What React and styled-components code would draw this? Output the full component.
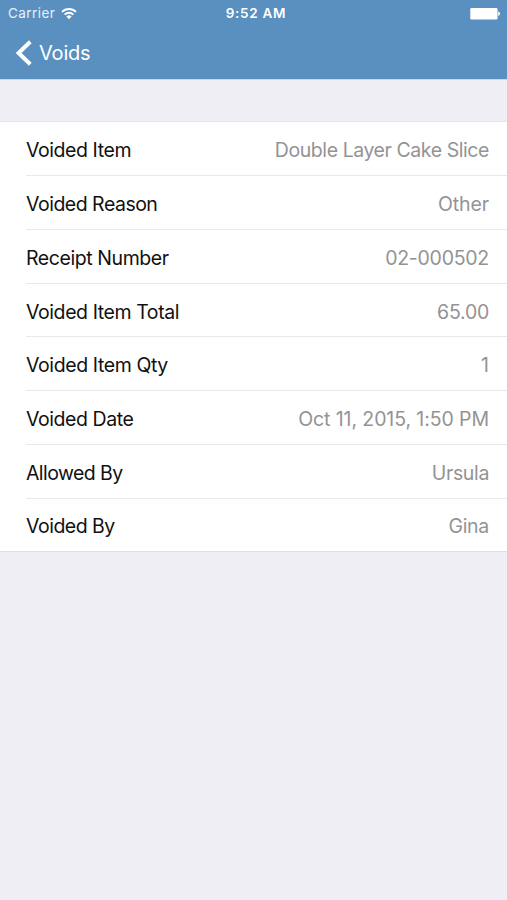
import React from 'react';
import styled, { createGlobalStyle } from 'styled-components';

const GlobalStyle = createGlobalStyle`
  body {
    margin: 0;
    background: #EFEEF4;
    font-family: Inter, "Liberation Sans", sans-serif;
  }
`;

const Screen = styled.div`
  width: 507px;
  height: 900px;
  overflow: hidden;
  background: #EFEEF4;
`;

const Header = styled.header`
  height: 79px;
  background: #5990BF;
  border-bottom: 1px solid #C3D8EA;
  color: #FFFFFF;
`;

const StatusBar = styled.div`
  height: 27px;
  padding: 0 6px 0 8px;
  display: grid;
  grid-template-columns: 1fr auto 1fr;
  align-items: center;
  font-size: 13.5px;
  line-height: 27px;
`;

const Carrier = styled.div`
  display: flex;
  align-items: center;
  gap: 6px;
  color: #E6F1FA;
  letter-spacing: 0.45px;
`;

const Time = styled.div`
  font-weight: 600;
  letter-spacing: 0.7px;
  padding-left: 3px;
`;

const Battery = styled.div`
  justify-self: end;
  display: flex;
  align-items: center;
`;

const BackButton = styled.button`
  height: 51px;
  padding: 0 0 0 15px;
  border: 0;
  background: none;
  color: #FFFFFF;
  display: flex;
  align-items: center;
  gap: 7px;
  font-family: inherit;
  font-size: 20px;
  letter-spacing: -0.2px;
`;

const List = styled.div`
  margin-top: 41.4px;
  background: #FFFFFF;
  border-top: 1px solid #E6E6EA;
  border-bottom: 1px solid #DFDFE3;
`;

const Row = styled.div`
  height: ${props => (props.last ? 52.7 : 53.75)}px;
  box-sizing: border-box;
  margin-left: 26px;
  padding-top: ${props => (props.last ? 2 : 3)}px;
  padding-right: 18px;
  display: flex;
  align-items: center;
  justify-content: space-between;
  border-bottom: ${props => (props.last ? 'none' : '1px solid #E9E9EB')};
  font-size: 19.5px;
`;

const Label = styled.span`
  color: #111111;
  letter-spacing: ${props => props.spacing}px;
`;

const Value = styled.span`
  color: #939395;
  letter-spacing: ${props => props.spacing}px;
`;

const rows = [
  { label: 'Voided Item', labelSpacing: -0.43, value: 'Double Layer Cake Slice', valueSpacing: -0.43 },
  { label: 'Voided Reason', labelSpacing: -0.5, value: 'Other', valueSpacing: -0.1 },
  { label: 'Receipt Number', labelSpacing: -0.42, value: '02-000502', valueSpacing: -0.25 },
  { label: 'Voided Item Total', labelSpacing: -0.42, value: '65.00', valueSpacing: -0.25 },
  { label: 'Voided Item Qty', labelSpacing: -0.4, value: '1', valueSpacing: 0 },
  { label: 'Voided Date', labelSpacing: -0.43, value: 'Oct 11, 2015, 1:50 PM', valueSpacing: -0.09 },
  { label: 'Allowed By', labelSpacing: -0.58, value: 'Ursula', valueSpacing: -0.35 },
  { label: 'Voided By', labelSpacing: -0.5, value: 'Gina', valueSpacing: -0.3 },
];

function WifiIcon() {
  return (
    <svg width="16" height="12" viewBox="0 0 16 12" fill="none" stroke="#FFFFFF" strokeWidth="1.9">
      <path d="M1 3.9a10 10 0 0 1 14 0" />
      <path d="M3.6 6.6a6.3 6.3 0 0 1 8.8 0" />
      <path d="M8 11.2L5.4 8.6a3.7 3.7 0 0 1 5.2 0z" fill="#FFFFFF" stroke="none" />
    </svg>
  );
}

function BatteryIcon() {
  return (
    <svg width="31" height="12" viewBox="0 0 31 12" fill="#FFFFFF">
      <rect x="0.3" y="0" width="27.2" height="11.5" rx="1.2" />
      <path d="M28.2 3.6c2.4 0.6 2.4 3.8 0 4.4z" />
    </svg>
  );
}

function BackIcon() {
  return (
    <svg width="17" height="26" viewBox="0 0 17 26" fill="none" stroke="#FFFFFF" strokeWidth="4">
      <path d="M15.3 1.7L3.6 13l11.7 11.3" />
    </svg>
  );
}

export default function App() {
  return (
    <Screen>
      <GlobalStyle />
      <Header>
        <StatusBar>
          <Carrier>
            Carrier
            <WifiIcon />
          </Carrier>
          <Time>9:52 AM</Time>
          <Battery>
            <BatteryIcon />
          </Battery>
        </StatusBar>
        <BackButton>
          <BackIcon />
          Voids
        </BackButton>
      </Header>
      <List>
        {rows.map((row, index) => (
          <Row key={row.label} last={index === rows.length - 1}>
            <Label spacing={row.labelSpacing}>{row.label}</Label>
            <Value spacing={row.valueSpacing}>{row.value}</Value>
          </Row>
        ))}
      </List>
    </Screen>
  );
}
